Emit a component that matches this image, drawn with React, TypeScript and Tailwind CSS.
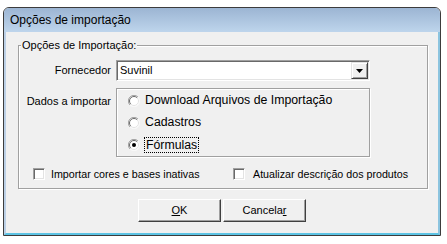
import React from 'react';

const tahoma = { fontFamily: '"Liberation Sans", Arial, sans-serif' };

function Radio({ checked }: { checked?: boolean }) {
    return (
        <svg width="12" height="12" viewBox="0 0 12 12" className="shrink-0">
            <circle cx="6" cy="6" r="5.5" fill="#fff" />
            <path d="M10 2 A5.5 5.5 0 0 0 2 10" fill="none" stroke="#a0a0a0" strokeWidth="1" />
            <path d="M9.2 2.8 A4.5 4.5 0 0 0 2.8 9.2" fill="none" stroke="#696969" strokeWidth="1" />
            <path d="M10 2 A5.5 5.5 0 0 1 2 10" fill="none" stroke="#f8f8f8" strokeWidth="1" />
            <path d="M9.2 2.8 A4.5 4.5 0 0 1 2.8 9.2" fill="none" stroke="#e3e3e3" strokeWidth="1" />
            {checked && <circle cx="6" cy="6" r="2" fill="#000" />}
        </svg>
    );
}

function CheckBox() {
    return (
        <span className="w-[12px] h-[12px] bg-white border border-t-[#a0a0a0] border-l-[#a0a0a0] border-r-white border-b-white shadow-[inset_1px_1px_0_#696969,inset_-1px_-1px_0_#e3e3e3] shrink-0" />
    );
}

function Button({ children }: { children: React.ReactNode }) {
    return (
        <button className="w-[83px] h-[23px] bg-[#f0f0f0] border border-t-white border-l-white border-r-[#404040] border-b-[#404040] shadow-[inset_-1px_-1px_0_#a0a0a0] text-[11px] text-black flex items-center justify-center" style={tahoma}>
            {children}
        </button>
    );
}

export default function App() {
    return (
        <div className="w-[447px] h-[244px] bg-white pl-[3px] pt-[7px]">
            <div className="w-[438px] h-[229px] border border-[#3c3c3c] rounded-t-[6px] overflow-hidden flex flex-col">
                <div className="h-[24px] shrink-0 bg-gradient-to-b from-[#9cb5d3] to-[#bed5ec] pl-[6px] flex items-center text-[12px] text-black" style={tahoma}>
                    Opções de importação
                </div>
                <div className="flex-1 bg-[#f0f0f0] border-l-2 border-r-2 border-b-2 border-l-[#bcd0e6] border-r-[#8cc4df] border-b-[#5cc3e4] flex flex-col text-[11px] text-black" style={tahoma}>
                    <fieldset className="ml-[12px] mt-[6px] w-[410px] border border-[#a0a0a0] shadow-[inset_1px_1px_0_#fff,1px_1px_0_#fff] pb-[7px]">
                        <legend className="ml-[2px] px-[1px] bg-[#f0f0f0] leading-[14px]">Opções de Importação:</legend>
                        <div className="pt-[8px] flex items-center">
                            <span className="w-[92px] text-right">Fornecedor</span>
                            <div className="ml-[5px] w-[254px] h-[21px] bg-white border border-t-[#a0a0a0] border-l-[#a0a0a0] border-r-white border-b-white shadow-[inset_1px_1px_0_#696969,inset_-1px_-1px_0_#e3e3e3] flex items-center pl-[3px] pr-[1px]">
                                <span className="flex-1">Suvinil</span>
                                <div className="w-[17px] h-[17px] bg-[#f0f0f0] border border-t-[#e3e3e3] border-l-[#e3e3e3] border-r-[#404040] border-b-[#404040] shadow-[inset_1px_1px_0_#fff,inset_-1px_-1px_0_#a0a0a0] flex items-center justify-center">
                                    <svg width="7" height="4" viewBox="0 0 7 4"><path d="M0 0H7L3.5 4Z" fill="#000" /></svg>
                                </div>
                            </div>
                        </div>
                        <div className="mt-[7px] flex items-start">
                            <span className="w-[92px] text-right mt-[5px]">Dados a importar</span>
                            <div className="ml-[5px] w-[254px] h-[69px] border border-[#a0a0a0] shadow-[inset_1px_1px_0_#fff,1px_1px_0_#fff] pl-[11px] pt-[5px] flex flex-col gap-[9px] text-[12.3px]" style={{ fontFamily: 'Arial, "Liberation Sans", sans-serif' }}>
                                <label className="flex items-center gap-[5px] h-[13px]"><Radio />Download Arquivos de Importação</label>
                                <label className="flex items-center gap-[5px] h-[13px]"><Radio />Cadastros</label>
                                <label className="flex items-center gap-[4px] h-[13px]"><Radio checked /><span className="border border-dotted border-black px-[1px] leading-[14px]">Fórmulas</span></label>
                            </div>
                        </div>
                        <div className="mt-[10px] h-[14px] flex items-center pl-[14px] text-[10.7px]">
                            <label className="w-[200px] flex items-center gap-[6px]"><CheckBox />Importar cores e bases inativas</label>
                            <label className="flex items-center gap-[8px]"><CheckBox />Atualizar descrição dos produtos</label>
                        </div>
                    </fieldset>
                    <div className="mt-[10px] flex justify-center gap-[2px]">
                        <Button><span className="underline">O</span>K</Button>
                        <Button>Cancela<span className="underline">r</span></Button>
                    </div>
                </div>
            </div>
        </div>
    );
}
